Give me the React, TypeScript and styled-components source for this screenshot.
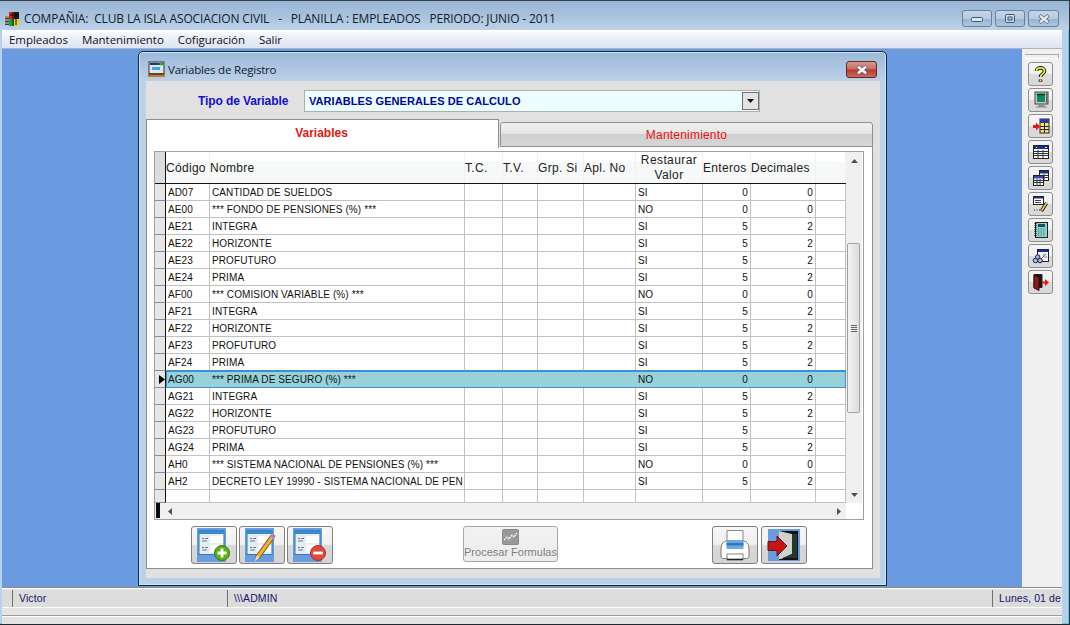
import React from "react";
import styled, { createGlobalStyle } from "styled-components";

const Global = createGlobalStyle`
  html, body { margin: 0; padding: 0; background: #b8d2ec; overflow: hidden; }
  * { box-sizing: border-box; }
`;

const Root = styled.div`
  width: 1070px; height: 625px; display: flex; flex-direction: column; overflow: hidden;
  background: #b7d2ec; border-top: 1px solid #3a3f44; border-right: 1px solid #30383e; border-bottom: 1px solid #1d2a33;
  box-shadow: inset -1px -1px 0 #5cc4ea; font-family: "Liberation Sans", Arial, sans-serif;
`;
const TitleBar = styled.div`
  height: 29px; flex: none; display: flex; align-items: center; padding: 6px 10px 0 4px;
  background: linear-gradient(180deg, #9ab6d6 0%, #a6c0dc 45%, #bcd2e8 100%);
`;
const TitleText = styled.span`
  margin-left: 4px; font: 12px "Open Sans", "Noto Sans", sans-serif; color: #10202e; white-space: pre; letter-spacing: -0.15px;
`;
const WinButtons = styled.div` margin-left: auto; display: flex; gap: 3px; `;
const WinButton = styled.div<{ $w?: number }>`
  width: ${(p) => p.$w ?? 30}px; height: 17px; display: flex; align-items: center; justify-content: center;
  border: 1px solid #6c8098; border-radius: 3px;
  background: linear-gradient(180deg, #c4d6e8 0%, #b4cbe2 50%, #98b4d2 52%, #aac6e0 100%);
`;
const Frame = styled.div` flex: 1; display: flex; flex-direction: column; margin: 0 7px 0 2px; min-height: 0; `;
const MenuBar = styled.div`
  height: 19px; flex: none; display: flex; align-items: center; gap: 14px; padding: 0 7px;
  background: linear-gradient(180deg, #fff 0%, #eef1f9 35%, #dfe4f3 100%); border-bottom: 1px solid #aab2c4;
`;
const MenuItem = styled.span` font: 11.5px "Open Sans", "Noto Sans", sans-serif; color: #111; letter-spacing: -0.04px; `;
const Work = styled.div` height: 538px; flex: none; display: flex; `;
const Mdi = styled.div` flex: 1; background: #6a9ae0; padding: 2px 0 0 136px; `;
const Tools = styled.div`
  width: 40px; background: #f0f0f0; display: flex; flex-direction: column; align-items: flex-start; gap: 2px; padding: 13px 0 0 6px; position: relative;
  &::before { content: ""; position: absolute; left: 3px; right: 3px; top: 5px; height: 3px; border-top: 1px solid #aaa; border-right: 1px solid #aaa; border-bottom: 1px solid #fff; }
`;
const ToolButton = styled.div`
  width: 25px; height: 24px; display: flex; align-items: center; justify-content: center;
  border: 1px solid #8e8e8e; border-radius: 3px;
  background: linear-gradient(180deg, #f6f6f6 0%, #f0f0f0 50%, #dcdcdc 52%, #d8d8d8 100%);
`;
const Dialog = styled.div`
  width: 749px; height: 535px; display: flex; flex-direction: column; padding: 0 6px 7px 7px;
  border: 1px solid #0c2c40; border-radius: 5px 5px 0 0; box-shadow: inset 0 0 0 1px #d4e2f0;
  background: linear-gradient(180deg, #9cb9da 0, #bcd2e8 30px, #b9d2ea 100%);
`;
const DialogTitle = styled.div` height: 29px; flex: none; display: flex; align-items: center; padding: 6px 3px 0 2px; `;
const DialogTitleText = styled.span` margin-left: 3px; font: 11.5px "Open Sans", "Noto Sans", sans-serif; color: #10202e; letter-spacing: -0.2px; `;
const CloseButton = styled.div`
  margin-left: auto; width: 31px; height: 17px; display: flex; align-items: center; justify-content: center;
  border: 1px solid #5d2a2a; border-radius: 3px;
  background: linear-gradient(180deg, #dc9a90 0%, #c86a5e 48%, #b43a2c 52%, #cb6a5c 100%);
`;
const Client = styled.div` flex: 1; background: #e1e1e1; display: flex; flex-direction: column; padding-bottom: 9px; min-height: 0; `;
const TipoRow = styled.div` height: 38px; flex: none; display: flex; align-items: center; padding: 2px 0 0 52px; gap: 16px; `;
const TipoLabel = styled.label` width: 90px; white-space: nowrap; font: bold 12px "Liberation Sans", sans-serif; color: #1010d0; letter-spacing: -0.1px; `;
const Combo = styled.div`
  width: 456px; height: 22px; display: flex; align-items: center; justify-content: space-between; padding: 0 0 0 4px;
  background: #edfeff; border: 1px solid #a8b0b4;
  font: bold 11px "Liberation Sans", sans-serif; letter-spacing: 0.07px; color: #00089a;
`;
const ComboArrow = styled.div`
  width: 17px; height: 18px; display: flex; align-items: center; justify-content: center;
  background: #e4e4e4; border: 1px solid #707070;
`;
const TabRow = styled.div` height: 28px; flex: none; display: flex; align-items: flex-start; position: relative; z-index: 1; `;
const TabBase = styled.div`
  display: flex; align-items: center; justify-content: center; font-size: 12px; color: #ea1414;
  border: 1px solid #8f8f8f;
`;
const ActiveTab = styled(TabBase)`
  width: 353px; height: 29px; background: #fff; font-weight: bold; border-bottom: 0; padding: 0 2px 3px 0; margin-right: 1px;
`;
const IdleTab = styled(TabBase)`
  width: 373px; height: 25px; margin-top: 3px; letter-spacing: 0.2px; padding-top: 1px; border-radius: 3px 3px 0 0;
  background: linear-gradient(180deg, #f0f0f0 0%, #e6e6e6 45%, #cfcfcf 50%, #d6d6d6 100%);
`;
const Panel = styled.div`
  width: 727px; flex: 1; background: #fff; border: 1px solid #8f8f8f; border-top: 0; padding: 4px 0 0 7px; display: flex; flex-direction: column; min-height: 0;
`;
const GridBox = styled.div`
  width: 710px; height: 369px; flex: none; border: 1px solid #a0a0a0; display: grid; grid-template-columns: 691px 16px; grid-template-rows: 351px 16px; background: #fff;
`;
const GridBody = styled.div` overflow: hidden; position: relative; `;
const COLS = "11px 44px 255px 38px 35px 46px 52px 67px 48px 65px 30px";
const HeadRow = styled.div`
  height: 32px; display: grid; grid-template-columns: ${COLS}; border-bottom: 1px solid #111;
  font-size: 12px; letter-spacing: 0.4px; color: #222;
  background: linear-gradient(180deg, #fff 0, #fff 9px, #f7f8f8 10px, #f7f8f8 100%);
`;
const HeadGutter = styled.div` background: #dcdcdc; border-right: 1px solid #111; `;
const HeadCell = styled.div<{ $center?: boolean }>`
  display: flex; align-items: center; padding: 1px 0 0 0; white-space: pre-line; line-height: 15px; border-right: 1px solid #f0f0f0;
  justify-content: ${(p) => (p.$center ? "center" : "flex-start")}; text-align: ${(p) => (p.$center ? "center" : "left")};
  letter-spacing: ${(p) => (p.$center ? "0.4px" : "0.3px")};
`;
const Row = styled.div<{ $h?: number }>`
  height: ${(p) => p.$h ?? 17}px; display: grid; grid-template-columns: ${COLS}; font-size: 10px; letter-spacing: 0.1px; color: #111; position: relative;
`;
const Gutter = styled.div`
  background: #e6e6e6; border-right: 1px solid #111; border-bottom: 1px solid #8c8c8c; display: flex; align-items: center; justify-content: flex-end;
`;
const Cell = styled.div<{ $right?: boolean; $sel?: boolean }>`
  display: flex; align-items: center; overflow: hidden; white-space: nowrap;
  padding: 0 ${(p) => (p.$right ? "2px" : "0")} 0 2px;
  justify-content: ${(p) => (p.$right ? "flex-end" : "flex-start")};
  border-right: 1px solid ${(p) => (p.$sel ? "transparent" : "#c2c2c2")};
  border-bottom: 1px solid ${(p) => (p.$sel ? "transparent" : "#c2c2c2")};
  background: ${(p) => (p.$sel ? "#98d2d8" : "#fff")};
`;
const SelBorder = styled.div`
  position: absolute; left: 11px; right: 0; top: -1px; bottom: -1px; border: 2px solid #3f8fd6; border-width: 2px 1px; pointer-events: none;
`;
const VScroll = styled.div` background: #f0f0f0; position: relative; `;
const Thumb = styled.div`
  position: absolute; left: 1px; right: 2px; top: 91px; height: 170px; background: linear-gradient(90deg, #f4f4f4, #dcdcdc);
  border: 1px solid #a2a2a2; border-radius: 2px; display: flex; align-items: center; justify-content: center;
`;
const Arrow = styled.svg<{ $top?: number; $bottom?: number }>`
  position: absolute; left: 5px; ${(p) => (p.$top != null ? `top: ${p.$top}px;` : "")} ${(p) => (p.$bottom != null ? `bottom: ${p.$bottom}px;` : "")}
`;
const HScroll = styled.div`
  background: #f0f0f0; display: flex; align-items: center; justify-content: space-between; padding: 0 5px 0 0;
`;
const HGutter = styled.div` width: 11px; height: 100%; display: flex; margin-right: 2px; `;
const HBlack = styled.div` width: 4px; height: 15px; background: #0c0c0c; margin-left: 1px; `;
const Spacer = styled.span` flex: 1; `;
const Corner = styled.div` background: #fff; `;
const ActionRow = styled.div` display: flex; align-items: flex-start; padding: 6px 0 0 37px; `;
const BigButton = styled.div<{ $ml?: number }>`
  width: 46px; height: 38px; display: flex; align-items: center; justify-content: center; margin-left: ${(p) => p.$ml ?? 2}px;
  border: 1px solid #7f7f7f; border-radius: 3px;
  background: linear-gradient(180deg, #f6f6f6 0%, #f0f0f0 48%, #d8d8d8 52%, #d4d4d4 100%);
`;
const ProcessButton = styled.div`
  width: 95px; height: 36px; margin-left: 130px; margin-right: 154px; display: flex; flex-direction: column; align-items: center; padding-top: 2px;
  border: 1px solid #a8a8a8; border-radius: 3px; background: linear-gradient(180deg, #f2f2f2, #ececec);
  font-size: 11px; color: #808080; line-height: 14px; white-space: nowrap;
`;
const Status = styled.div`
  height: 28px; flex: none; padding-top: 2px; background: #e4e4e4; border-top: 1px solid #8a8a8a; box-shadow: inset 0 1px 0 #fff; display: flex; align-items: flex-start; overflow: hidden;
`;
const StatusCell = styled.div<{ $w: number }>`
  height: 17px; width: ${(p) => p.$w}px; flex: none; display: flex; align-items: center; padding: 0 0 1px 6px; overflow: hidden; white-space: nowrap;
  font-size: 10.5px; letter-spacing: 0.1px; color: #14146a; border-left: 1px solid #707070; background: #dcdcdc; box-shadow: 0 1px 0 #fff;
`;
const StatusLead = styled.div` width: 10px; height: 17px; flex: none; background: #dcdcdc; box-shadow: 0 1px 0 #fff; `;
const BottomStrip = styled.div` flex: 1; background: #e2e2e2; border-top: 1px solid #9c9c9c; box-shadow: inset 0 1px 0 #fff; `;

/* ---------- icons ---------- */
const Svg = (p: { w?: number; h?: number; children: React.ReactNode }) => (
  <svg width={p.w ?? 18} height={p.h ?? 18} viewBox={`0 0 ${p.w ?? 18} ${p.h ?? 18}`} style={{ flex: "none" }}>{p.children}</svg>
);

const AppIcon = () => (
  <Svg w={16} h={16}>
    <rect x="1" y="5" width="5" height="9" fill="#2d3a8c" />
    <path d="M0 6h6M0 9h6M0 12h6" stroke="#e8e84a" />
    <rect x="5" y="1" width="5" height="7" fill="#d82020" />
    <rect x="10" y="1" width="5" height="7" fill="#1a1a1a" />
    <rect x="5" y="8" width="5" height="7" fill="#20a038" />
    <rect x="10" y="8" width="5" height="7" fill="#f0d020" />
    <path d="M6 4h9M9 1v14M12 2v12" stroke="#111" strokeWidth="1" />
  </Svg>
);
const DialogIcon = () => (
  <Svg w={17} h={17}>
    <rect x="1" y="1" width="15" height="12" fill="#dfe6ea" stroke="#333" />
    <rect x="2" y="2" width="13" height="2" fill="#18406a" />
    <rect x="4" y="6" width="8" height="3" fill="#3fa8d8" />
    <circle cx="13" cy="3" r="1.6" fill="#28b040" />
    <path d="M0 13h17v3H0z" fill="#c8782c" />
    <path d="M1 13h15" stroke="#111" />
  </Svg>
);
const XGlyph = ({ c }: { c: string }) => (
  <Svg w={14} h={10}>
    <path d="M2.5 1.5L11.5 8.5M11.5 1.5L2.5 8.5" stroke="#54616e" strokeWidth="3.6" />
    <path d="M3 1.8L11 8.2M11 1.8L3 8.2" stroke={c} strokeWidth="2.4" />
  </Svg>
);
const Help = () => (
  <Svg>
    <path d="M4.5 6C4.5 1.8 12.5 1.8 12.5 6C12.5 9 8.5 8.8 8.5 12" fill="none" stroke="#111" strokeWidth="3.6" />
    <path d="M8.5 14.5v2.2" stroke="#111" strokeWidth="3.6" />
    <path d="M4.5 6C4.5 1.8 12.5 1.8 12.5 6C12.5 9 8.5 8.8 8.5 12" fill="none" stroke="#f4ee30" strokeWidth="1.8" />
    <path d="M8.5 14.7v1.6" stroke="#f4ee30" strokeWidth="1.8" />
  </Svg>
);
const Monitor = () => (
  <Svg>
    <rect x="3" y="1" width="13" height="12" fill="#c6c6c6" stroke="#444" />
    <rect x="5" y="3" width="8" height="8" fill="#0e8a6a" />
    <path d="M5 3h8v1H5zM6 5h2" stroke="#063" strokeWidth="1" />
    <rect x="14" y="2" width="1.5" height="10" fill="#666" />
    <path d="M7 14h5v1H7zM4 16h11" stroke="#8a8a8a" strokeWidth="1.2" />
  </Svg>
);
const ImportIcon = () => (
  <Svg>
    <rect x="8" y="2" width="9" height="14" fill="#f2ea50" stroke="#222244" />
    <rect x="8" y="2" width="9" height="4" fill="#2e3a9e" />
    <path d="M8 9.5h9M8 12.5h9M12.5 6v10" stroke="#222244" />
    <path d="M1 8h3V5.5L8 9.5L4 13.5V11H1z" fill="#ec1212" />
  </Svg>
);
const TableIcon = () => (
  <Svg>
    <rect x="1.5" y="2.5" width="15" height="13" fill="#fff" stroke="#222" />
    <rect x="2" y="3" width="14" height="3" fill="#1c2a9a" />
    <path d="M2 8.5h14M2 10.5h14M2 12.5h14M6 7v8M11 7v8" stroke="#333" strokeWidth="1" />
    <path d="M4 4.5h1M13 4.5h2" stroke="#fff" />
  </Svg>
);
const TablesIcon = () => (
  <Svg>
    <rect x="7.5" y="1.5" width="9" height="10" fill="#fff" stroke="#222" />
    <rect x="8" y="2" width="8" height="2.5" fill="#1c2a9a" />
    <path d="M8 6.5h8M8 8.5h8M12 5v6" stroke="#333" />
    <rect x="1.5" y="6.5" width="10" height="10" fill="#fff" stroke="#222" />
    <rect x="2" y="7" width="9" height="2.5" fill="#3a4ab0" />
    <path d="M2 11.5h9M2 13.5h9M5 10v6M8 10v6" stroke="#333" />
  </Svg>
);
const EditIcon = () => (
  <Svg>
    <rect x="1.5" y="1.5" width="10" height="8" fill="#fff" stroke="#222" />
    <rect x="2" y="2" width="9" height="1.5" fill="#1c2a9a" />
    <path d="M3 5.5h6M3 7.5h6" stroke="#444" />
    <path d="M2 15h1M4.5 15h1M7 15h1" stroke="#222" />
    <path d="M9.5 16L14.5 8" stroke="#222" strokeWidth="3.4" />
    <path d="M9.7 15.5L14.5 8" stroke="#e8c850" strokeWidth="1.6" />
  </Svg>
);
const Notebook = () => (
  <Svg>
    <rect x="3.5" y="1.5" width="12" height="15" fill="#8fd0c8" stroke="#222" />
    <path d="M3.5 2v14" stroke="#111" strokeWidth="2" strokeDasharray="1 1" />
    <rect x="6" y="3" width="7" height="3" fill="#1c4a6a" />
    <path d="M6 8h7M6 10h7M6 12h7M6 14h7" stroke="#3c8c86" strokeDasharray="1.5 1" />
  </Svg>
);
const ReportIcon = () => (
  <Svg>
    <rect x="5.5" y="2.5" width="11" height="12" fill="#f2f4f6" stroke="#222" />
    <rect x="6" y="3" width="10" height="2" fill="#1c2a9a" />
    <path d="M9 12l5-5" stroke="#666" />
    <path d="M11 8h2M12 10h3" stroke="#888" />
    <circle cx="3.5" cy="13.5" r="2.3" fill="#9fc0d8" stroke="#224" />
    <circle cx="8" cy="13.5" r="2.3" fill="#9fc0d8" stroke="#224" />
    <circle cx="5.7" cy="10" r="2.2" fill="#9fc0d8" stroke="#224" />
  </Svg>
);
const DoorIcon = () => (
  <Svg>
    <path d="M2 1.5h8v13H2z" fill="#1c1410" stroke="#222" />
    <path d="M2 2L7 4.5V17.5L2 15z" fill="#8c1c1c" stroke="#3c0808" />
    <path d="M10 8.5h3V6l4 3.5L13 13v-2.5h-3z" fill="#ee1414" />
  </Svg>
);

const FormBase = ({ children }: { children?: React.ReactNode }) => (
  <Svg w={34} h={34}>
    <rect x="0" y="0" width="29" height="34" fill="#6a9ae0" />
    <rect x="2" y="2.500" width="25" height="24" fill="#e4eef8" stroke="#2e78c0" />
    <rect x="2" y="2.500" width="25" height="3.500" fill="#3a8ad0" />
    <rect x="13" y="8" width="13" height="7" fill="#fff" />
    <rect x="13" y="17" width="13" height="7" fill="#fff" />
    <path d="M5 10.500h2M8 10.500h3M5 13h5M5 19.500h2M8 19.500h3M5 22h5" stroke="#707a84" strokeWidth="1" />
    {children}
  </Svg>
);
const AddIcon = () => (
  <FormBase>
    <circle cx="25" cy="25" r="7.500" fill="#5cb018" stroke="#3c7a10" />
    <path d="M25 20.500v9M20.500 25h9" stroke="#fff" strokeWidth="2.800" />
  </FormBase>
);
const PencilIcon = () => (
  <FormBase>
    <path d="M12 30L28 8" stroke="#7a5c18" strokeWidth="5" />
    <path d="M12 30L28 8" stroke="#f0b030" strokeWidth="3" />
    <path d="M27 9.500l2-3" stroke="#b080c0" strokeWidth="4.500" />
    <path d="M9.500 33.500l2.500-6 2.600 2z" fill="#f0dcb0" />
  </FormBase>
);
const RemoveIcon = () => (
  <FormBase>
    <circle cx="25" cy="25" r="7.500" fill="#e0483c" stroke="#a83028" />
    <path d="M20.200 25h9.600" stroke="#fff" strokeWidth="2.800" />
  </FormBase>
);
const Printer = () => (
  <Svg w={34} h={32}>
    <path d="M9 1.500h16v12H9z" fill="#fafafa" stroke="#888" />
    <path d="M3 21C3 14 6 12 9 12h16c3 0 6 2 6 9v6c0 1.500-1 2.500-2.500 2.500h-23C4 29.500 3 28.500 3 27z" fill="#fdfdfd" stroke="#777" />
    <rect x="8.500" y="11" width="17" height="9" rx="1" fill="#6fa8dc" />
    <rect x="8.500" y="14" width="17" height="2.500" fill="#2e78c8" />
    <rect x="9" y="25" width="16" height="5.500" fill="#fff" stroke="#888" />
    <path d="M9 30.500h16" stroke="#222" strokeWidth="1.600" />
  </Svg>
);
const ExitIcon = () => (
  <Svg w={34} h={34}>
    <rect x="1" y="1" width="32" height="32" fill="#6a9ae0" />
    <rect x="12" y="3" width="19" height="29" fill="#0a1410" />
    <path d="M12 3L25 6V26L14 31H12z" fill="#d0d0cc" />
    <path d="M25 6h5v24H16l9-4z" fill="#24382c" />
    <path d="M1 13.500h9V8l10 10-10 10v-5.500H1z" fill="#c81414" stroke="#6a1010" />
  </Svg>
);
const ChartIcon = () => (
  <Svg w={17} h={16}>
    <rect x="0.500" y="0.500" width="16" height="15" rx="1" fill="#999" stroke="#8a8a8a" />
    <path d="M2 11l3-3 2 2 3-4 2 2 3-4" stroke="#fff" strokeWidth="1.100" fill="none" strokeDasharray="2 0.600" />
  </Svg>
);

const ToolIcons = [Help, Monitor, ImportIcon, TableIcon, TablesIcon, EditIcon, Notebook, ReportIcon, DoorIcon];

type R = [string, string, string, number, number];
const rows: R[] = [
  ["AD07", "CANTIDAD DE SUELDOS", "SI", 0, 0],
  ["AE00", "*** FONDO DE PENSIONES (%) ***", "NO", 0, 0],
  ["AE21", "INTEGRA", "SI", 5, 2],
  ["AE22", "HORIZONTE", "SI", 5, 2],
  ["AE23", "PROFUTURO", "SI", 5, 2],
  ["AE24", "PRIMA", "SI", 5, 2],
  ["AF00", "*** COMISION VARIABLE (%) ***", "NO", 0, 0],
  ["AF21", "INTEGRA", "SI", 5, 2],
  ["AF22", "HORIZONTE", "SI", 5, 2],
  ["AF23", "PROFUTURO", "SI", 5, 2],
  ["AF24", "PRIMA", "SI", 5, 2],
  ["AG00", "*** PRIMA DE SEGURO (%) ***", "NO", 0, 0],
  ["AG21", "INTEGRA", "SI", 5, 2],
  ["AG22", "HORIZONTE", "SI", 5, 2],
  ["AG23", "PROFUTURO", "SI", 5, 2],
  ["AG24", "PRIMA", "SI", 5, 2],
  ["AH0", "*** SISTEMA NACIONAL DE PENSIONES (%) ***", "NO", 0, 0],
  ["AH2", "DECRETO LEY 19990 - SISTEMA NACIONAL DE PEN", "SI", 5, 2],
];

const heads: [string, boolean][] = [
  ["Código", false], ["Nombre", false], ["T.C.", false], ["T.V.", false], ["Grp. Si", false], ["Apl. No", false],
  ["Restaurar\nValor", true], ["Enteros", false], ["Decimales", false], ["", false],
];

export default function App() {
  return (
    <Root>
      <Global />
      <TitleBar>
        <AppIcon />
        <TitleText>{"COMPAÑIA:  CLUB LA ISLA ASOCIACION CIVIL   -   PLANILLA : EMPLEADOS   PERIODO: JUNIO - 2011"}</TitleText>
        <WinButtons>
          <WinButton><Svg w={12} h={6}><rect x="0.5" y="1.500" width="11" height="4" rx="1" fill="#dfe6ee" stroke="#44566a" /></Svg></WinButton>
          <WinButton><Svg w={12} h={9}><rect x="1.500" y="0.500" width="9" height="8" rx="1" fill="none" stroke="#44566a" /><rect x="3" y="2" width="6" height="5" fill="none" stroke="#e8eef4" /><rect x="4" y="3" width="4" height="3" fill="none" stroke="#44566a" /></Svg></WinButton>
          <WinButton $w={31}><XGlyph c="#e2e8ee" /></WinButton>
        </WinButtons>
      </TitleBar>
      <Frame>
        <MenuBar>
          {["Empleados", "Mantenimiento", "Cofiguración", "Salir"].map((m) => <MenuItem key={m}>{m}</MenuItem>)}
        </MenuBar>
        <Work>
          <Mdi>
            <Dialog>
              <DialogTitle>
                <DialogIcon />
                <DialogTitleText>Variables de Registro</DialogTitleText>
                <CloseButton><XGlyph c="#fff" /></CloseButton>
              </DialogTitle>
              <Client>
                <TipoRow>
                  <TipoLabel>Tipo de Variable</TipoLabel>
                  <Combo>
                    VARIABLES GENERALES DE CALCULO
                    <ComboArrow><Svg w={9} h={6}><path d="M1 1h7L4.500 5z" fill="#111" /></Svg></ComboArrow>
                  </Combo>
                </TipoRow>
                <TabRow>
                  <ActiveTab>Variables</ActiveTab>
                  <IdleTab>Mantenimiento</IdleTab>
                </TabRow>
                <Panel>
                  <GridBox>
                    <GridBody>
                      <HeadRow>
                        <HeadGutter />
                        {heads.map(([h, c], i) => <HeadCell key={i} $center={c}>{h}</HeadCell>)}
                      </HeadRow>
                      {rows.map((r) => {
                        const sel = r[0] === "AG00";
                        return (
                          <Row key={r[0]}>
                            <Gutter>{sel && <Svg w={6} h={9}><path d="M0 0l6 4.500L0 9z" fill="#000" /></Svg>}</Gutter>
                            <Cell $sel={sel}>{r[0]}</Cell>
                            <Cell $sel={sel}>{r[1]}</Cell>
                            <Cell $sel={sel} /><Cell $sel={sel} /><Cell $sel={sel} /><Cell $sel={sel} />
                            <Cell $sel={sel}>{r[2]}</Cell>
                            <Cell $sel={sel} $right>{r[3]}</Cell>
                            <Cell $sel={sel} $right>{r[4]}</Cell>
                            <Cell $sel={sel} />
                            {sel && <SelBorder />}
                          </Row>
                        );
                      })}
                      <Row $h={13}>
                        <Gutter />
                        {Array.from({ length: 10 }).map((_, i) => <Cell key={i} />)}
                      </Row>
                    </GridBody>
                    <VScroll>
                      <Arrow $top={7} width="7" height="4"><path d="M0 4h7L3.500 0z" fill="#505050" /></Arrow>
                      <Thumb><Svg w={6} h={7}><path d="M0 .5h6M0 2.500h6M0 4.500h6M0 6.500h6" stroke="#666" /></Svg></Thumb>
                      <Arrow $bottom={6} width="7" height="4"><path d="M0 0h7L3.500 4z" fill="#505050" /></Arrow>
                    </VScroll>
                    <HScroll>
                      <HGutter><HBlack /></HGutter>
                      <Svg w={4} h={7}><path d="M4 0v7L0 3.500z" fill="#505050" /></Svg>
                      <Spacer />
                      <Svg w={4} h={7}><path d="M0 0v7l4-3.500z" fill="#505050" /></Svg>
                    </HScroll>
                    <Corner />
                  </GridBox>
                  <ActionRow>
                    <BigButton $ml={0}><AddIcon /></BigButton>
                    <BigButton><PencilIcon /></BigButton>
                    <BigButton><RemoveIcon /></BigButton>
                    <ProcessButton><ChartIcon />Procesar Formulas</ProcessButton>
                    <BigButton $ml={0}><Printer /></BigButton>
                    <BigButton $ml={3}><ExitIcon /></BigButton>
                  </ActionRow>
                </Panel>
              </Client>
            </Dialog>
          </Mdi>
          <Tools>
            {ToolIcons.map((I, i) => <ToolButton key={i}><I /></ToolButton>)}
          </Tools>
        </Work>
        <Status>
          <StatusLead />
          <StatusCell $w={215}>Victor</StatusCell>
          <StatusCell $w={765}>{"\\\\\\ADMIN"}</StatusCell>
          <StatusCell $w={69}>Lunes, 01 de</StatusCell>
        </Status>
        <BottomStrip />
      </Frame>
    </Root>
  );
}
